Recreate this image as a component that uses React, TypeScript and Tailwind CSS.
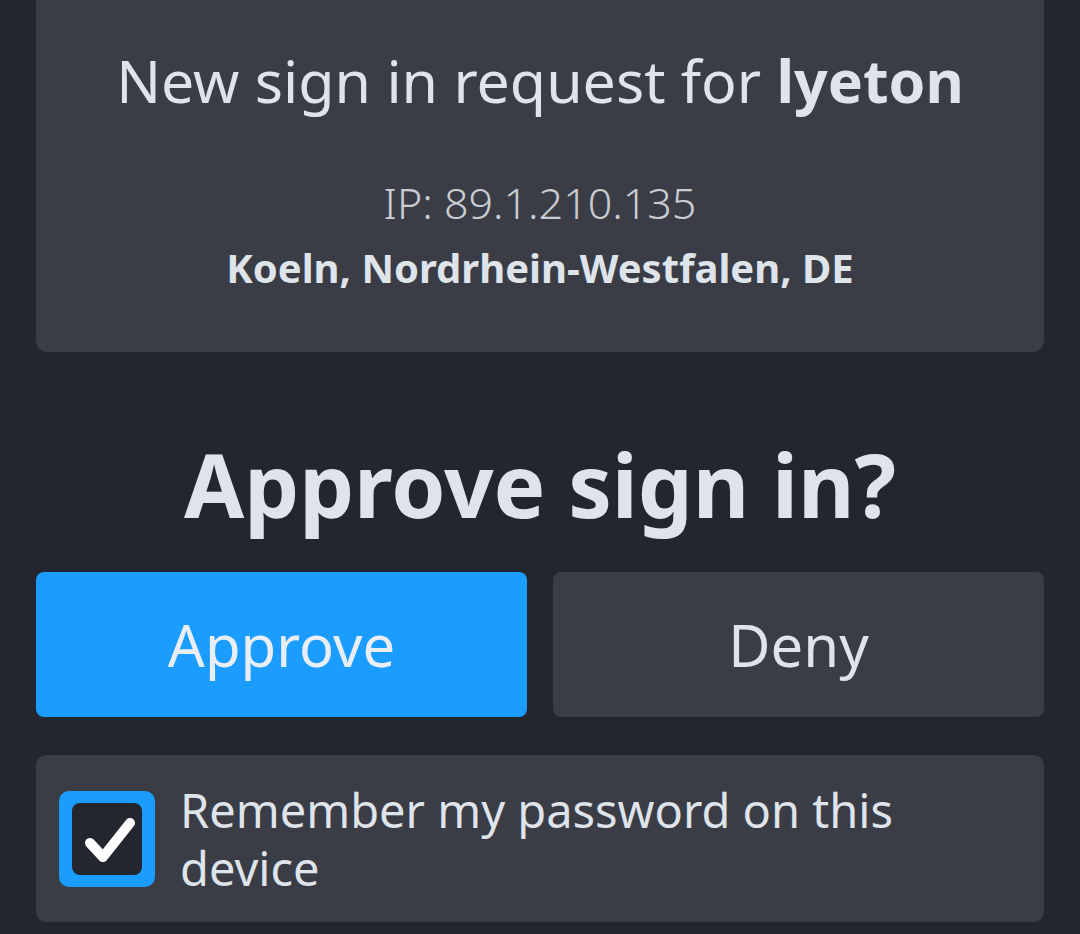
import { useState } from 'react'

export default function App() {
  const [remember, setRemember] = useState(true)

  return (
    <main className="min-h-screen w-full bg-[#23262e] px-[36px] font-['Noto_Sans',sans-serif] text-[#dfe3ea]">
      <section className="flex h-[352px] flex-col items-center rounded-b-[12px] bg-[#3a3d46] text-center">
        <h2 className="mt-[40px] text-[59px] leading-[80px] font-normal">
          New sign in request for <span className="font-bold">lyeton</span>
        </h2>
        <p className="mt-[57px] text-[43px] leading-[52px] font-light text-[#c9ccd2]">
          IP: 89.1.210.135
        </p>
        <p className="mt-[14px] text-[40px] leading-[50px] font-bold">
          Koeln, Nordrhein-Westfalen, DE
        </p>
      </section>

      <h1 className="mt-[82px] text-center text-[87px] leading-[100px] font-bold text-[#dfe3ea]">
        Approve sign in?
      </h1>

      <div className="mt-[38px] grid grid-cols-2 gap-[26px]">
        <button className="flex h-[145px] items-center justify-center rounded-[8px] bg-[#1a9dff] text-[58px] text-[#e9eef5]">
          Approve
        </button>
        <button className="flex h-[145px] items-center justify-center rounded-[8px] bg-[#3a3d46] text-[58px] text-[#dfe3ea]">
          Deny
        </button>
      </div>

      <label className="mt-[38px] flex h-[167px] cursor-pointer items-center gap-[25px] rounded-[10px] bg-[#3a3d46] px-[23px]">
        <span
          onClick={() => setRemember(!remember)}
          className="flex h-[96px] w-[96px] shrink-0 items-center justify-center rounded-[10px] bg-[#1a9dff]"
        >
          <span className="flex h-[72px] w-[70px] items-center justify-center rounded-[8px] bg-[#23262e]">
            {remember ? (
              <svg viewBox="0 0 70 72" className="h-[72px] w-[70px]">
                <path
                  d="M18 40 L31 54 L58 20"
                  fill="none"
                  stroke="#ffffff"
                  strokeWidth="10"
                  strokeLinecap="round"
                  strokeLinejoin="round"
                />
              </svg>
            ) : null}
          </span>
        </span>
        <span className="text-[47px] leading-[58px]">
          Remember my password on this
          <br />
          device
        </span>
      </label>
    </main>
  )
}
